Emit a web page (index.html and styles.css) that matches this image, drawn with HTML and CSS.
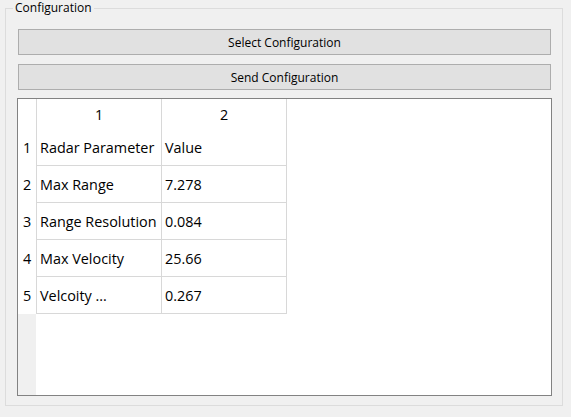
FILE: index.html
```html
<!DOCTYPE html>
<html>
<head>
<meta charset="utf-8">
<link rel="stylesheet" href="styles.css">
</head>
<body>
<div class="group">
  <span class="group-title">Configuration</span>
  <button class="btn">Select Configuration</button>
  <button class="btn">Send Configuration</button>
  <div class="table-frame">
    <div class="grid">
      <div class="vh corner"></div>
      <div class="hh">1</div>
      <div class="hh">2</div>
      <div class="filler"></div>

      <div class="vh">1</div>
      <div class="cell">Radar Parameter</div>
      <div class="cell">Value</div>
      <div class="filler"></div>

      <div class="vh">2</div>
      <div class="cell">Max Range</div>
      <div class="cell">7.278</div>
      <div class="filler"></div>

      <div class="vh">3</div>
      <div class="cell">Range Resolution</div>
      <div class="cell">0.084</div>
      <div class="filler"></div>

      <div class="vh">4</div>
      <div class="cell">Max Velocity</div>
      <div class="cell">25.66</div>
      <div class="filler"></div>

      <div class="vh">5</div>
      <div class="cell">Velcoity ...</div>
      <div class="cell">0.267</div>
      <div class="filler"></div>

      <div class="vh-empty"></div>
      <div class="empty"></div>
    </div>
  </div>
</div>
</body>
</html>
```

FILE: styles.css
```css
html, body {
  margin: 0;
  padding: 0;
  background: #f0f0f0;
  font-family: "Open Sans", "Noto Sans", "Liberation Sans", sans-serif;
  color: #000;
}

body {
  width: 571px;
  height: 417px;
  overflow: hidden;
}

.group {
  position: relative;
  box-sizing: border-box;
  margin: 8px 0 0 5px;
  width: 558px;
  height: 398px;
  border: 1px solid #dcdcdc;
  padding: 20px 10px 9px 11px;
  display: flex;
  flex-direction: column;
}

.group-title {
  position: absolute;
  top: -9px;
  left: 7px;
  padding: 0 2px;
  background: #f0f0f0;
  font-size: 12px;
  line-height: 16px;
}

.btn {
  box-sizing: border-box;
  margin: 0 1px;
  height: 26px;
  border: 1px solid #adadad;
  background: #e1e1e1;
  font-family: inherit;
  font-size: 12px;
  color: #000;
  padding: 0;
}

.btn + .btn {
  margin-top: 9px;
}

.table-frame {
  margin-top: 8px;
  flex: 1;
  border: 1px solid #828282;
  background: #fff;
  display: flex;
}

.grid {
  flex: 1;
  display: grid;
  grid-template-columns: 19px 125px 125px 1fr;
  grid-template-rows: 30px repeat(5, 37px) 1fr;
  font-size: 14.4px;
}

.vh {
  border-right: 1px solid #d8d8d8;
  display: flex;
  align-items: center;
  justify-content: center;
  background: #fff;
}

.hh {
  border-right: 1px solid #d8d8d8;
  display: flex;
  align-items: center;
  justify-content: center;
}

.cell {
  border-right: 1px solid #d8d8d8;
  border-bottom: 1px solid #d8d8d8;
  display: flex;
  align-items: center;
  padding-left: 3px;
  white-space: nowrap;
  overflow: hidden;
}

.vh-empty {
  background: #f0f0f0;
  width: 18px;
}

.empty {
  grid-column: 2 / 5;
}
```
